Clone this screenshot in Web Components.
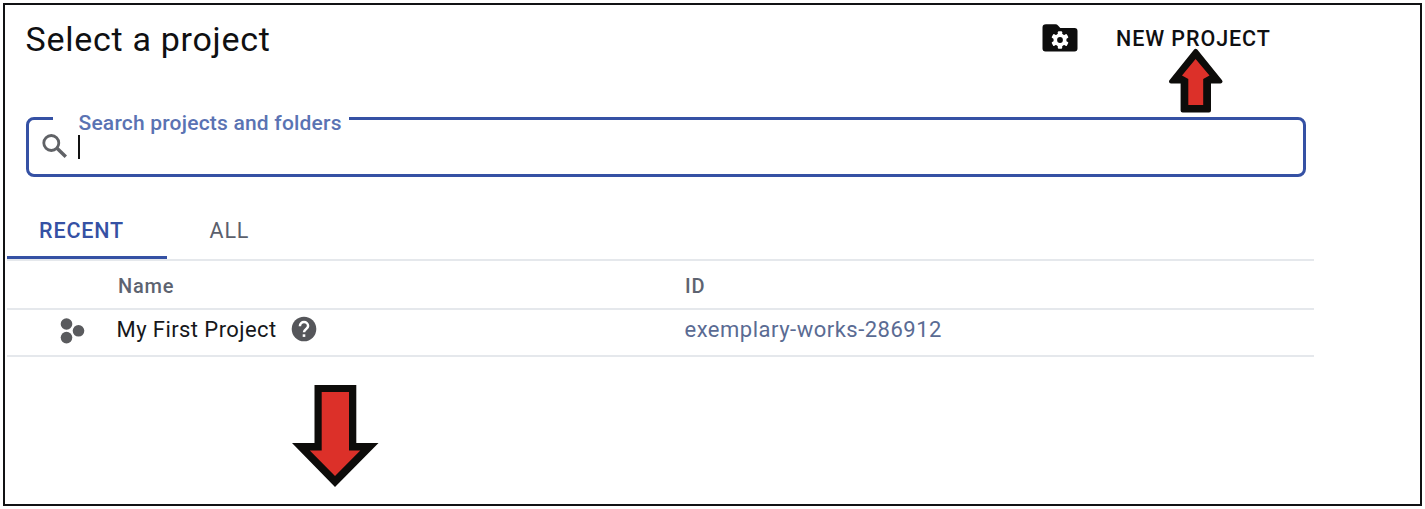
<!DOCTYPE html>
<html lang="en"><head><meta charset="utf-8"><title>Select a project</title>
<style>html,body{margin:0;background:#fff}body{width:1425px;height:509px;overflow:hidden;font-family:Roboto,"Liberation Sans",sans-serif;color:#0f1012}</style></head>
<body>
<project-dialog>
  <dialog-header slot="header">Select a project</dialog-header>
  <search-field slot="search">Search projects and folders</search-field>
  <tab-bar slot="tabs"></tab-bar>
  <project-table slot="table"></project-table>
  <down-arrow slot="marks"></down-arrow>
  <up-arrow slot="marks"></up-arrow>
</project-dialog>
<script>
function define(name, html){
  customElements.define(name, class extends HTMLElement{
    constructor(){ super(); this.attachShadow({mode:'open'}).innerHTML = html; }
  });
}
define('project-dialog', `<style>
:host{display:block;box-sizing:border-box;width:1425px;height:509px;padding:3px}
main{box-sizing:border-box;width:1419px;height:503px;border:2px solid #111214;padding-left:2px}
</style><main><slot name="header"></slot><slot name="search"></slot><slot name="tabs"></slot><slot name="table"></slot><slot name="marks"></slot></main>`);

define('dialog-header', `<style>
:host{display:flex;height:66px;align-items:center;width:1307px;padding-left:18.500px;box-sizing:border-box}
h1{margin:0;padding-top:2px;font-size:34px;font-weight:400;line-height:40px;letter-spacing:.72px;width:1016.500px;white-space:nowrap}
.new{font-size:21.500px;font-weight:475;letter-spacing:.92px;margin-left:38px;white-space:nowrap}
</style><h1><slot></slot></h1><manage-icon></manage-icon><span class="new">NEW PROJECT</span>`);

define('manage-icon', `<style>:host{display:block;width:36px;height:28px}svg{display:block}</style>
<svg width="36" height="28" viewBox="0 0 36 28"><path fill="#0d0d0d" d="M4 .3h9.500q1.500 0 2.500 1.200l2.300 2.500h14.200q3 0 3 3v17.500q0 3-3 3H3.500q-3 0-3-3V3.500q0-3.200 3.500-3.200z"/>
<g fill="#fff" transform="translate(18 16)"><circle r="6.500"/><rect x="-2.200" y="-8.700" width="4.400" height="17.400" rx="1"/><rect x="-2.200" y="-8.700" width="4.400" height="17.400" rx="1" transform="rotate(60)"/><rect x="-2.200" y="-8.700" width="4.400" height="17.400" rx="1" transform="rotate(120)"/></g><circle cx="18" cy="16" r="2.900" fill="#0d0d0d"/></svg>`);

define('search-field', `<style>
:host{display:block;margin:46px 0 0 18.500px;width:1280px;height:60px;position:relative}
fieldset{box-sizing:border-box;margin:0;height:60px;border:3px solid #3551a4;border-radius:8px;padding:0;display:flex;align-items:flex-start}
.row{display:flex;align-items:center;padding:14px 0 0 13px;gap:10.500px;position:relative;z-index:1}
i{display:block;width:2px;height:24px;background:#111}
label{position:absolute;left:27px;top:-8px;width:296px;padding-left:26px;height:28px;line-height:28px;font-size:21px;font-weight:500;letter-spacing:.2px;color:#5a73b3;background:#fff;box-sizing:border-box;white-space:nowrap}
</style><fieldset><div class="row"><svg width="26" height="25" viewBox="0 0 26 25" fill="none" stroke="#606266"><circle cx="9.300" cy="9" r="7.500" stroke-width="2.800"/><path d="M14.500 13.800L23.800 22.800" stroke-width="3.500"/></svg><i></i></div></fieldset><label><slot></slot></label>`);

define('tab-bar', `<style>
:host{display:flex;box-sizing:border-box;width:1307px;height:56px;margin-top:28px;border-bottom:2px solid #e5e8ec;font-size:21.500px;font-weight:500;letter-spacing:.85px;line-height:52px}
.a{box-sizing:border-box;width:160px;height:54px;border-bottom:3px solid #3551a4;padding-left:32px;color:#3551a4}
.b{padding-left:42.500px;color:#5b606c;font-weight:450}
</style><div class="a"><span>RECENT</span></div><div class="b"><span>ALL</span></div>`);

define('project-table', `<style>
:host{display:block;width:1307px}
.r{display:grid;grid-template-columns:111px 567px 1fr;align-items:center;border-bottom:2px solid #e5e8ec;height:44px;padding-top:3px;white-space:nowrap}
.r.d{height:38px;padding:0 0 7px;grid-template-columns:109.500px 568px 1fr}
.h{font-size:20px;font-weight:500;letter-spacing:.8px;color:#5d6370}
.name{display:flex;align-items:center;gap:14px;font-size:22px;letter-spacing:.42px;color:#16171a}
.id{font-size:22px;letter-spacing:.5px;color:#5a6b93}
svg{display:block}.d svg{flex:none}
.dots{margin:3px 0 0 52.500px}
</style><div class="r h"><span></span><div><span>Name</span></div><div><span>ID</span></div></div>
<div class="r d"><svg class="dots" width="25" height="26" viewBox="0 0 25 26" fill="#5a5b5e"><circle cx="6.500" cy="6" r="5.800"/><circle cx="18.500" cy="12.800" r="5.800"/><circle cx="6.500" cy="19.600" r="5.800"/></svg>
<div class="name"><span>My First Project</span><svg width="26" height="26" viewBox="0 0 26 26"><circle cx="13" cy="13" r="12.300" fill="#55565a"/><path d="M8.900 10.300C8.900 4.600 17.100 4.800 17.100 10.100C17.100 12.900 13 13 13 16.300" fill="none" stroke="#fff" stroke-width="2.500"/><rect x="11.700" y="18.300" width="2.600" height="2.600" fill="#fff"/></svg></div>
<div class="id"><span>exemplary-works-286912</span></div></div>`);

define('down-arrow', `<style>:host{position:absolute;left:292px;top:385px}svg{display:block}</style>
<svg width="87" height="103" viewBox="292 385 87 103"><path fill="#0d0c0a" d="M314.500 385H356.300V443H378.500L335 487L292 443H314.500z"/><path fill="#dc3029" d="M321.700 392H349V450.500H360.300L335 476L309.800 450.500H321.700z"/></svg>`);
define('up-arrow', `<style>:host{position:absolute;left:1168px;top:47px}svg{display:block}</style>
<svg width="56" height="67" viewBox="1168 47 56 67"><path fill="#0d0c0a" stroke="#0d0c0a" stroke-width="4" stroke-linejoin="round" d="M1195.700 50.800L1220.500 81.400H1209V110.400H1182.600V81.400H1171z"/><path fill="#dc3029" d="M1195.600 59L1209.500 75.500L1203.200 79V105H1188.300V79L1182 75.500z"/></svg>`);
</script></body></html>
